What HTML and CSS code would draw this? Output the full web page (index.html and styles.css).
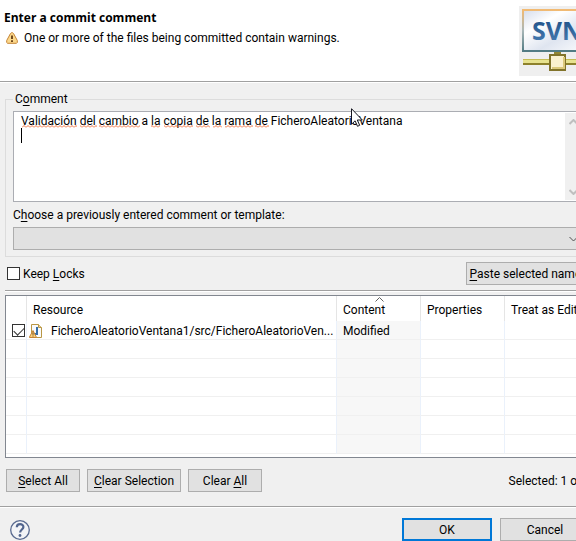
FILE: index.html
```html
<!DOCTYPE html>
<html lang="en">
<head>
<meta charset="utf-8">
<title>Commit</title>
<link rel="stylesheet" href="styles.css">
</head>
<body>
<form class="dialog">
  <header class="banner">
    <div class="banner-text">
      <h1>Enter a commit comment</h1>
      <p class="message">
        <svg class="warn" viewBox="0 0 12 12" aria-hidden="true"><path d="M4.500 1.500 5.500.7h1l1 .8 3.800 7v2l-.8.8h-9l-.8-.8v-2z" fill="#fbd88b" stroke="#c58436"/><path d="M5 3.500h2v3.600H5zM5 8.300h2v1.600H5z" fill="#70481c"/></svg>
        <span>One or more of the files being committed contain warnings.</span>
      </p>
    </div>
    <svg class="logo" viewBox="0 0 76 70" role="img" aria-label="SVN">
      <defs>
        <linearGradient id="screen" x2="1" y2="1"><stop offset="0" stop-color="#d5dceb"/><stop offset=".3" stop-color="#fff"/><stop offset=".6" stop-color="#dfe5f0"/><stop offset="1" stop-color="#fff"/></linearGradient>
        <linearGradient id="frame" x2="0" y2="1"><stop offset="0" stop-color="#f2ba72"/><stop offset=".5" stop-color="#a9b7b8"/><stop offset="1" stop-color="#527b84"/></linearGradient>
        <linearGradient id="letters" x2="0" y2="1"><stop offset="0" stop-color="#17477d"/><stop offset="1" stop-color="#4d83b9"/></linearGradient>
      </defs>
      <path d="M0 0h76v70H0z" fill="#efefef"/>
      <path d="M4 4h70v41H4z" fill="url(#screen)" stroke="url(#frame)" stroke-width="2"/>
      <path d="M4 45h70" stroke="#527b84" stroke-width="2"/>
      <text class="logo-text" x="13" y="34" fill="url(#letters)">SVN</text>
      <path d="M4 53h72v6H4z" fill="#e7e28f"/><path d="M4 53.500h72" stroke="#c5bd54"/><path d="M4 58h72" stroke="#8d812c" stroke-width="2"/>
      <path d="M35 46h7v3h-7z" fill="#938735"/>
      <path d="M31 49h15v15H31z" fill="#fbf1cf" stroke="#81732a" stroke-width="2"/>
      <path d="M33 62h12V51" fill="none" stroke="#dcc97c" stroke-width="2"/>
    </svg>
  </header>

  <main class="content">
    <fieldset class="group">
      <legend><label for="comment">C<u>o</u>mment</label></legend>
      <div class="editor">
        <textarea id="comment" spellcheck="false">Validación del cambio a la copia de la rama de FicheroAleatorioVentana
</textarea>
        <svg class="squiggles" aria-hidden="true">
          <defs><pattern id="wave" width="4" height="3" patternUnits="userSpaceOnUse"><path d="M0 2.500 2 .500l2 2" fill="none" stroke="#f0703c"/></pattern></defs>
          <g fill="url(#wave)"><rect x="0" width="55" height="3"/><rect x="58" width="17" height="3"/><rect x="77" width="41" height="3"/><rect x="129" width="9" height="3"/><rect x="142" width="29" height="3"/><rect x="174" width="14" height="3"/><rect x="191" width="9" height="3"/><rect x="203" width="28" height="3"/><rect x="233" width="14" height="3"/></g>
        </svg>
        <span class="caret"></span>
        <div class="scrollbar" aria-hidden="true">
          <svg viewBox="0 0 9 6"><path d="M.5 5 4.500 1l4 4" /></svg>
          <svg viewBox="0 0 9 6"><path d="M.5 1 4.500 5l4-4" /></svg>
        </div>
        <svg class="pointer" viewBox="0 0 12 19" aria-hidden="true"><path d="M.5.7v15.600l3.600-3.500 2.400 5.500 2.200-1-2.400-5.300h5z" fill="#fff" stroke="#15151f"/></svg>
      </div>
      <label class="template-label" for="template">C<u>h</u>oose a previously entered comment or template:</label>
      <div class="combo">
        <select id="template"><option></option></select>
        <svg viewBox="0 0 9 6" aria-hidden="true"><path d="M.5 1 4.500 5l4-4"/></svg>
      </div>
    </fieldset>

    <div class="options">
      <label class="check"><input type="checkbox"><span>Keep <u>L</u>ocks</span></label>
      <button type="button" class="paste"><u>P</u>aste selected names</button>
    </div>
    <hr>

    <div class="resources">
      <table>
        <colgroup><col class="c-check"><col class="c-resource"><col class="c-content"><col class="c-props"><col></colgroup>
        <thead><tr><th></th><th>Resource</th><th>Content<svg class="sort" viewBox="0 0 9 5" aria-hidden="true"><path d="M.5 4.500l4-4 4 4"/></svg></th><th>Properties</th><th>Treat as Edit</th></tr></thead>
        <tbody>
          <tr>
            <td class="tick"><input type="checkbox" checked aria-label="Include file"></td>
            <td><div class="file"><svg viewBox="0 0 14 14" aria-hidden="true"><path d="M2.500.5h7l3 3v10h-10z" fill="#f8fafd" stroke="#b99745"/><path d="M9.500.5v3h3" fill="#e9d6a0" stroke="#b99745"/><path d="M7 3h2v7H7zM5 9h4v2H5z" fill="#336da9"/><path d="M4 6.500 7.300 13v.5H.500V13z" fill="#fbd27c" stroke="#c58436"/><path d="M4 8.500v2.300M4 11.500v1" stroke="#67421d"/></svg><span>FicheroAleatorioVentana1/src/FicheroAleatorioVen...</span></div></td>
            <td class="sorted">Modified</td><td></td><td></td>
          </tr>
          <tr><td></td><td></td><td class="sorted"></td><td></td><td></td></tr>
          <tr><td></td><td></td><td class="sorted"></td><td></td><td></td></tr>
          <tr><td></td><td></td><td class="sorted"></td><td></td><td></td></tr>
          <tr><td></td><td></td><td class="sorted"></td><td></td><td></td></tr>
          <tr><td></td><td></td><td class="sorted"></td><td></td><td></td></tr>
          <tr><td></td><td></td><td class="sorted"></td><td></td><td></td></tr>
        </tbody>
      </table>
    </div>

    <div class="selection">
      <button type="button" class="short"><u>S</u>elect All</button>
      <button type="button" class="long"><u>C</u>lear Selection</button>
      <button type="button" class="short">Clear <u>A</u>ll</button>
      <span class="count">Selected: 1 of 1</span>
    </div>
  </main>

  <footer class="actions">
    <button type="button" class="help" aria-label="Help"><svg viewBox="0 0 20 20" aria-hidden="true"><circle cx="10" cy="10" r="9.300" fill="#f2f3f6" stroke="#58698f" stroke-width="1.300"/><path d="M6.800 7.300c0-4.300 6.600-4.100 6.600-.4 0 2.500-3.300 2.700-3.300 5.700" fill="none" stroke="#52658e" stroke-width="2.200"/><circle cx="10" cy="15.500" r="1.400" fill="#52658e"/></svg></button>
    <button type="submit" class="action default">OK</button>
    <button type="button" class="action">Cancel</button>
  </footer>
</form>
</body>
</html>
```
FILE: styles.css
```css
* { box-sizing: border-box; }

body {
  margin: 0;
  overflow: hidden;
  background: #f0f0f0;
  color: #000;
  font: 12px/16px Roboto, "Open Sans", sans-serif;
}

button, select, textarea, input { font: inherit; color: inherit; }
u { text-underline-offset: 2px; }

.dialog { width: calc(100% + 20px); }

.banner {
  display: flex;
  justify-content: space-between;
  padding: 6px 0 5px 4px;
  background: #fff;
  border-bottom: 1px solid #a0a0a0;
}
.banner-text { padding-top: 4px; }
h1 { margin: 0; font: bold 12px/16px "Open Sans", sans-serif; }
.message { display: flex; align-items: center; gap: 6px; margin: 4px 0 0 2px; }
.warn { width: 12px; height: 12px; }
.logo { width: 76px; height: 70px; margin-right: 1px; }
.logo-text { font: bold 25px "Open Sans", sans-serif; }

.content { padding: 8px 5px 0; border-top: 1px solid #fff; }

.group { margin: 0; padding: 4px 7px 6px; border: 1px solid #dcdcdc; min-width: 0; }
legend { padding: 0 2px; margin-left: 0; }

.editor { position: relative; height: 91px; border: 1px solid #abadb3; background: #fff; }
textarea {
  display: block;
  width: 100%;
  height: 100%;
  padding: 1px 24px 0 7px;
  border: 0;
  outline: 0;
  resize: none;
  overflow: hidden;
  background: transparent;
}
.squiggles { position: absolute; left: 8px; top: 13px; width: 248px; height: 3px; }
.caret { position: absolute; left: 7px; top: 16px; width: 1px; height: 15px; background: #000; }
.scrollbar {
  position: absolute;
  top: 1px;
  right: 0;
  bottom: 1px;
  width: 17px;
  display: flex;
  flex-direction: column;
  align-items: center;
  justify-content: space-between;
  padding: 6px 0 5px;
  background: #f0f0f0;
}
.scrollbar svg { width: 9px; height: 6px; fill: none; stroke: #bfbfbf; stroke-width: 2; }
.pointer { position: absolute; left: 337px; top: -4px; width: 12px; height: 19px; }

.template-label { display: block; margin: 5px 0 4px; }
.combo { position: relative; }
select {
  display: block;
  width: 100%;
  height: 23px;
  appearance: none;
  border: 1px solid #adadad;
  border-radius: 0;
  background: #e1e1e1;
}
.combo svg { position: absolute; right: 5px; top: 9px; width: 9px; height: 6px; fill: none; stroke: #505050; }

.options { display: flex; align-items: center; justify-content: space-between; margin-top: 5px; }
.check { display: flex; align-items: center; gap: 3px; padding-left: 2px; }

input[type="checkbox"] {
  display: block;
  appearance: none;
  width: 13px;
  height: 13px;
  margin: 0;
  border: 1px solid #333;
  background: #fff;
}
input[type="checkbox"]:checked::after {
  content: "";
  display: block;
  width: 9px;
  height: 5px;
  margin: 2px 0 0 1px;
  border: solid #333;
  border-width: 0 0 1px 1px;
  transform: rotate(-45deg);
}

button {
  height: 23px;
  padding: 0;
  border: 1px solid #adadad;
  border-radius: 0;
  background: #e1e1e1;
  white-space: nowrap;
}
.paste { width: 125px; }

hr { margin: 5px -5px 0 0; border: 0; height: 2px; background: #fff; border-top: 1px solid #a0a0a0; }

.resources { margin-top: 3px; height: 163px; border: 1px solid #828790; background: #fff; }
table { width: 100%; table-layout: fixed; border-collapse: separate; border-spacing: 0; }
.c-check { width: 21px; }
.c-resource { width: 310px; }
.c-content, .c-props { width: 84px; }
th {
  position: relative;
  height: 25px;
  padding: 2px 0 0 6px;
  border-right: 1px solid #e5e5e5;
  text-align: left;
  font-weight: normal;
  white-space: nowrap;
}
.sort { position: absolute; left: 38px; top: 1px; width: 9px; height: 5px; fill: none; stroke: #606060; }
td {
  height: 19px;
  padding: 2px 0 0 6px;
  border-right: 1px solid #eaf1fb;
  border-bottom: 1px solid #f0f0f0;
  white-space: nowrap;
}
td.sorted { background: #f7f7f7; }
td.tick { padding: 0 0 0 6px; }
.file { display: flex; align-items: center; gap: 8px; margin-left: -4px; }
.file svg { width: 14px; height: 14px; flex: none; }

.selection { display: flex; align-items: center; gap: 7px; margin-top: 11px; padding-left: 1px; }
.short { width: 74px; }
.long { width: 94px; }
.count { margin-left: auto; }

.actions {
  display: flex;
  align-items: center;
  gap: 8px;
  margin-top: 14px;
  padding: 11px 6px 0 10px;
  border-top: 1px solid #a0a0a0;
  box-shadow: inset 0 1px #fff;
}
.help { width: 20px; height: 20px; margin-right: auto; border: 0; background: none; }
.help svg { display: block; width: 20px; height: 20px; }
.action { width: 90px; }
.default { border: 2px solid #0078d7; }
```
